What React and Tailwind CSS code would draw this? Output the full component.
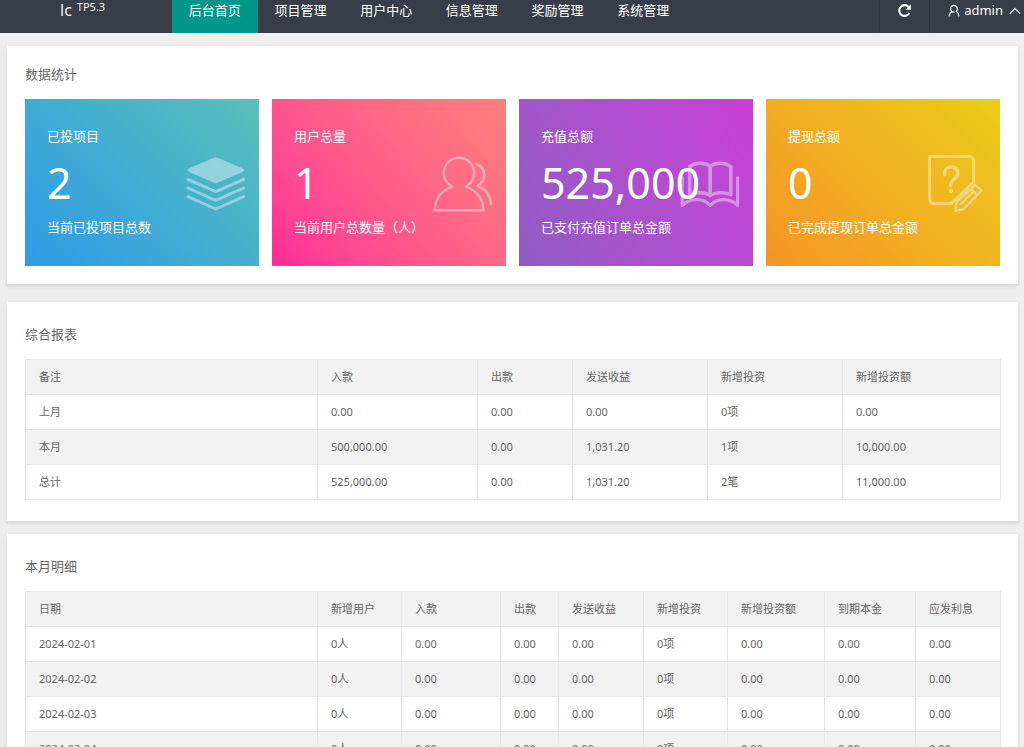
import React from "react";

const navItems = ["后台首页", "项目管理", "用户中心", "信息管理", "奖励管理", "系统管理"];

const LayersIcon = () => (
  <>
    <path
      d="M28 5.2Q29.7 4.3 31.4 5.2L56.5 15.8Q59 17 56.5 18.4L31.4 29.3Q29.7 30.2 28 29.3L3 18.4Q.4 17 3 15.8Z"
      fill="currentColor"
    />
    <path d="M1.9 26.3 29.7 38.6 57.7 26.3M1.9 35 29.7 47.3 57.7 35M1.9 43.7 29.7 56 57.7 43.7" strokeWidth="3" />
  </>
);

const UsersIcon = () => (
  <>
    <path
      d="M19.3 33.6A15.2 15.2 0 1 1 32.7 33.6C43.5 37.2 50.3 46 50.5 57.3H1.8C2 46 8.5 37.2 19.3 33.6"
      strokeWidth="2.4"
    />
    <path d="M43.7 11.2C52.6 14.5 54.4 27 44.7 32.7C52.5 36 57.7 43 58 51" strokeWidth="2.6" />
  </>
);

const BookIcon = () => (
  <>
    <path
      d="M30.2 13.2C25.5 9.4 15.5 8.8 9.7 13.7V41.7C15.5 38.8 25.5 39 30.2 42.6C35 39 45 38.8 50.8 41.7V13.7C45 8.8 35 9.4 30.2 13.2V42.6"
      strokeWidth="3.6"
    />
    <path d="M2.2 24.5V52.4C10 45 23 44.5 30.2 52.4C37.5 44.5 50 45 57.6 52.4V24.5" strokeWidth="3.2" />
  </>
);

const EditIcon = () => (
  <>
    <path d="M46.6 29V8.5Q46.6 3.4 41.5 3.4H2.6V45.5Q2.6 50.7 8 50.7H24.3L46.6 29" strokeWidth="3" />
    <path
      d="M29.5 49 48.3 32 54.6 37.3 36.6 56.2 28.6 57.9ZM43.8 36 50.2 41.6M33.6 51.2 46 39.2"
      strokeWidth="2.4"
    />
    <path d="M17.2 21.8C17.2 11.4 30.8 11.6 30.8 20.2C30.8 26 23.7 25.5 23.7 32.4" strokeWidth="3.4" />
    <circle cx="24" cy="38" r="2.2" fill="currentColor" stroke="none" />
  </>
);

const stats = [
  {
    label: "已投项目",
    value: "2",
    note: "当前已投项目总数",
    bg: "bg-linear-45 from-[#2d9ae7] to-[#5abfb9]",
    Icon: LayersIcon,
  },
  {
    label: "用户总量",
    value: "1",
    note: "当前用户总数量（人）",
    bg: "bg-linear-50 from-[#ff2a97] to-[#ff807a]",
    Icon: UsersIcon,
  },
  {
    label: "充值总额",
    value: "525,000",
    note: "已支付充值订单总金额",
    bg: "bg-linear-60 from-[#8f5cc3] to-[#c93dd8]",
    Icon: BookIcon,
  },
  {
    label: "提现总额",
    value: "0",
    note: "已完成提现订单总金额",
    bg: "bg-linear-45 from-[#f49426] to-[#ebcc19]",
    Icon: EditIcon,
  },
];

const summaryColumns = [
  { title: "备注", width: "w-[292px]" },
  { title: "入款", width: "w-[160px]" },
  { title: "出款", width: "w-[95px]" },
  { title: "发送收益", width: "w-[135px]" },
  { title: "新增投资", width: "w-[135px]" },
  { title: "新增投资额", width: "w-[158px]" },
];

const summaryRows = [
  ["上月", "0.00", "0.00", "0.00", "0项", "0.00"],
  ["本月", "500,000.00", "0.00", "1,031.20", "1项", "10,000.00"],
  ["总计", "525,000.00", "0.00", "1,031.20", "2笔", "11,000.00"],
];

const detailColumns = [
  { title: "日期", width: "w-[292px]" },
  { title: "新增用户", width: "w-[84px]" },
  { title: "入款", width: "w-[99px]" },
  { title: "出款", width: "w-[58px]" },
  { title: "发送收益", width: "w-[85px]" },
  { title: "新增投资", width: "w-[84px]" },
  { title: "新增投资额", width: "w-[97px]" },
  { title: "到期本金", width: "w-[91px]" },
  { title: "应发利息", width: "w-[85px]" },
];

const detailRows = ["2024-02-01", "2024-02-02", "2024-02-03", "2024-02-04"].map((date) => [
  date,
  "0人",
  "0.00",
  "0.00",
  "0.00",
  "0项",
  "0.00",
  "0.00",
  "0.00",
]);

const Panel = ({ title, className, children }) => (
  <section className={`bg-white px-[18px] shadow-[0_2px_4px_rgba(0,0,0,0.12)] ${className}`}>
    <h2 className="text-[13px] leading-5 text-[#666]">{title}</h2>
    {children}
  </section>
);

const StatCard = ({ label, value, note, bg, Icon }) => (
  <div className={`relative h-[167px] px-[22px] pt-[27px] text-white ${bg}`}>
    <p className="text-[13px] leading-5">{label}</p>
    <p className="mt-[7px] text-[43px] leading-[60px]">{value}</p>
    <p className="mt-1 text-[13px] leading-5 whitespace-nowrap">{note}</p>
    <svg
      viewBox="0 0 60 60"
      className="absolute top-[54px] right-[13px] size-[60px] opacity-40"
      fill="none"
      stroke="currentColor"
      strokeLinecap="round"
      strokeLinejoin="round"
      aria-hidden="true"
    >
      <Icon />
    </svg>
  </div>
);

const DataTable = ({ columns, rows }) => (
  <table className="w-full table-fixed border-collapse text-left text-[11px] leading-4 text-[#666]">
    <thead>
      <tr className="h-[35px] bg-[#f1f1f1]">
        {columns.map((col) => (
          <th key={col.title} className={`border border-[#e6e6e6] px-[13px] font-normal ${col.width}`}>
            {col.title}
          </th>
        ))}
      </tr>
    </thead>
    <tbody>
      {rows.map((row) => (
        <tr key={row[0]} className="h-[35px] even:bg-[#f1f1f1]">
          {row.map((cell, index) => (
            <td key={index} className="border border-[#e6e6e6] px-[13px]">
              {cell}
            </td>
          ))}
        </tr>
      ))}
    </tbody>
  </table>
);

const Header = () => (
  <header className="flex h-[33px] bg-[#393d49] text-[13px] leading-5 text-white">
    <a href="#" className="flex w-[172px] shrink-0 gap-[5px] pl-[60px] text-[#f2f2f2]">
      <span className="text-base leading-5">lc</span>
      <span className="text-[11px] leading-[14px]">TP5.3</span>
    </a>
    <nav className="flex w-[514px] shrink-0">
      {navItems.map((item, index) => (
        <a key={item} href="#" className={`flex-1 text-center ${index === 0 ? "bg-[#009688]" : ""}`}>
          {item}
        </a>
      ))}
    </nav>
    <div className="ml-auto flex">
      <button
        type="button"
        aria-label="刷新"
        className="flex w-[50px] justify-center border-l border-[#30343e] pt-[3px]"
      >
        <svg viewBox="0 0 14 14" className="size-[15px]" fill="none" stroke="currentColor" strokeWidth="2">
          <path d="M11.6 9.2A5 5 0 1 1 10.8 3.7" />
          <path d="M12.9 1.2V6.2H7.9Z" fill="currentColor" stroke="none" />
        </svg>
      </button>
      <button type="button" className="flex items-start border-l border-[#30343e] pr-[3px] pl-[18px]">
        <svg
          viewBox="0 0 12 14"
          className="mt-1 mr-1 h-[14px] w-3"
          fill="none"
          stroke="currentColor"
          strokeWidth="1.2"
          strokeLinecap="round"
        >
          <path d="M6 8.2A3.4 3.4 0 1 1 8.3 7.3C9.8 8.2 10.7 9.8 10.8 12M4.2 7.5C2.4 8.2 1.3 9.8 1.2 12" />
        </svg>
        admin
        <svg
          viewBox="0 0 12 8"
          className="mt-[7px] ml-[6px] h-2 w-3"
          fill="none"
          stroke="#d5d6d9"
          strokeWidth="1.4"
        >
          <path d="M.8 6.8 6 1.4 11.2 6.8" />
        </svg>
      </button>
    </div>
  </header>
);

const App = () => {
  return (
    <div className="h-screen overflow-hidden bg-[#eee] font-['Noto_Sans','Noto_Sans_CJK_SC',sans-serif]">
      <Header />
      <main className="pt-[13px] pr-[6px] pl-[7px]">
        <Panel title="数据统计" className="pt-[18px] pb-[18px]">
          <div className="mt-[15px] grid grid-cols-4 gap-[13px]">
            {stats.map((stat) => (
              <StatCard key={stat.label} {...stat} />
            ))}
          </div>
        </Panel>
        <Panel title="综合报表" className="mt-[18px] space-y-[15px] pt-[22px] pb-[21px]">
          <DataTable columns={summaryColumns} rows={summaryRows} />
        </Panel>
        <Panel title="本月明细" className="mt-[13px] space-y-[15px] pt-[22px] pb-[21px]">
          <DataTable columns={detailColumns} rows={detailRows} />
        </Panel>
      </main>
    </div>
  );
};

export default App;
